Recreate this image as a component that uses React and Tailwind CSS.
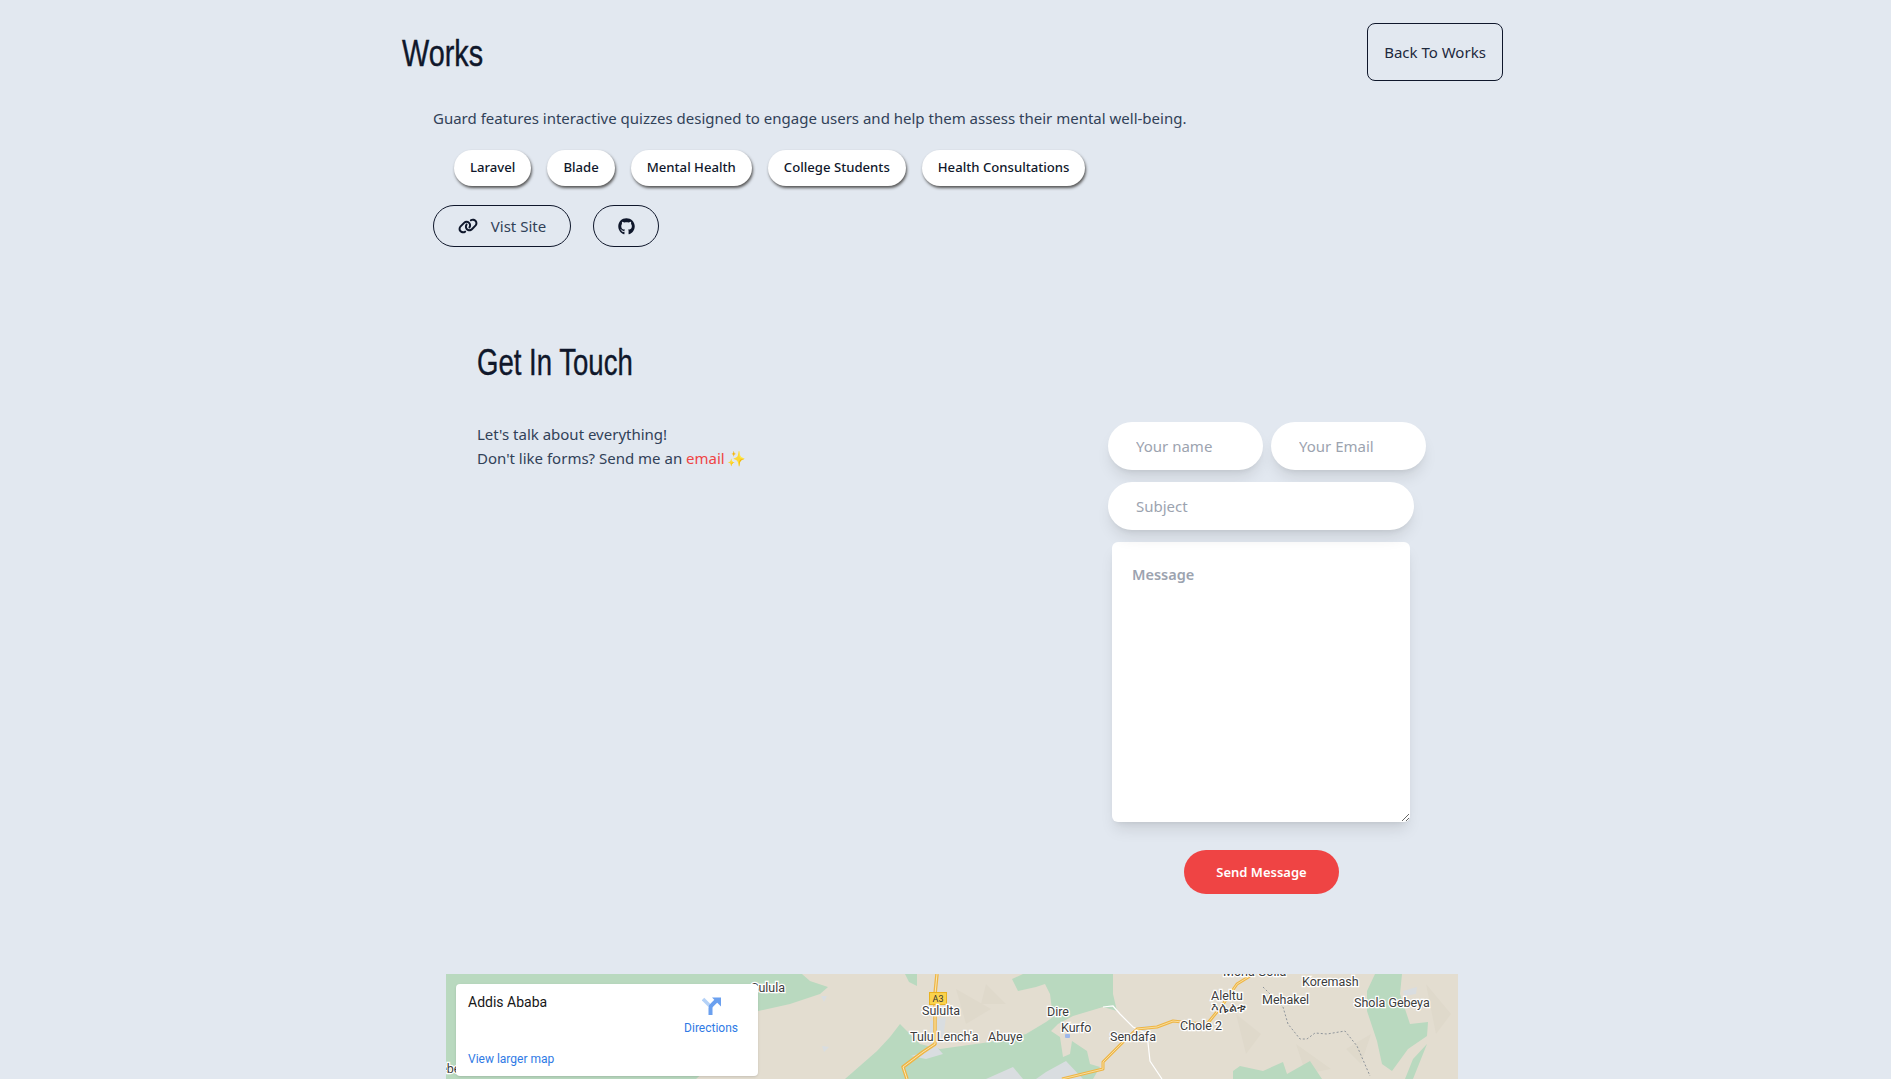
import { FaGithub, FaLink } from "react-icons/fa6";

const tags = ["Laravel", "Blade", "Mental Health", "College Students", "Health Consultations"];

const mapLabels = [
  ["Sulula", 305, 18],
  ["Debe", -14, 99],
  ["Sululta", 476, 41],
  ["Tulu Lench'a", 464, 67],
  ["Abuye", 542, 67],
  ["Dire", 601, 42],
  ["Kurfo", 615, 58],
  ["Sendafa", 664, 67],
  ["Chole 2", 734, 56],
  ["Aleltu", 765, 26],
  ["እሌልቱ", 765, 38],
  ["Moha Golla", 777, 2],
  ["Mehakel", 816, 30],
  ["Koremash", 856, 12],
  ["Shola Gebeya", 908, 33],
];

function MapDrawing() {
  return (
    <svg viewBox="0 0 1012 105" className="block h-[105px] w-full">
      <rect width="1012" height="105" fill="#e3ddd0" />
      <g fill="#dfd9cb">
        <path d="M790 40L815 60L800 80ZM850 70L885 95L860 100ZM900 75L925 60L915 90ZM980 10L1005 40L990 60ZM510 15L545 35L520 50ZM540 10L560 30L535 30Z" />
      </g>
      <g fill="#b9d9bf">
        <path d="M0 0H356L364 7L382 13L374 20L344 30L312 37L300 60L250 105H0Z" />
        <path d="M399 105L431 77L444 63L454 50L461 57L474 70L494 75L544 68L580 60L600 48L607 43L604 20L599 10L590 13L572 17L566 5L577 0H667V20L671 37L657 33L627 42L612 50L605 57L614 63L617 83L624 80L626 67L641 77L644 90L654 93L647 105Z" />
        <path d="M459 0H471V12L463 8Z" />
        <path d="M929 0H956L954 20L964 50L982 48L981 62L962 75L946 97L936 90L931 67L921 37V17Z" />
        <path d="M981 70L967 85L959 105H967Z" />
        <path d="M787 97L794 92L817 97L837 88L841 100L864 87L876 105H787Z" />
      </g>
      <g fill="#d9dde0">
        <path d="M484 47L500 43L497 65L490 72L497 80L480 85L465 82L478 78L484 70Z" />
        <path d="M567 93L577 105H540Z" />
        <path d="M620 87L637 105H590L600 98Z" />
        <path d="M957 17L971 13L970 20L958 22Z" />
        <path d="M691 53L705 50L700 60ZM375 22L381 22L378 28ZM376 72L383 73L378 78Z" />
      </g>
      <rect x="619" y="60" width="5" height="4" rx="1" fill="#9db7ea" />
      <path d="M657 33L667 32L674 40L687 53L701 60L704 87L716 105" fill="none" stroke="#fff" strokeWidth="1.2" />
      <path d="M817 13L837 33L842 50L854 65L861 65L869 59L881 60L899 57L911 72L924 102" fill="none" stroke="#8f959b" strokeWidth="1" strokeDasharray="2 2" />
      <g fill="none" strokeLinejoin="round">
        <path d="M491 0L489 20V70L477 78L457 93L461 105" stroke="#eeb544" strokeWidth="3.5" />
        <path d="M491 0L489 20V70L477 78L457 93L461 105" stroke="#fbe7b3" strokeWidth="1" />
        <path d="M616 105L657 95V88L677 68L691 55L711 53L727 47L745 49L761 50L775 33L791 10L804 2" stroke="#eeb544" strokeWidth="3" />
        <path d="M616 105L657 95V88L677 68L691 55L711 53L727 47L745 49L761 50L775 33L791 10L804 2" stroke="#fbe7b3" strokeWidth="0.8" />
      </g>
      <rect x="483.5" y="18.5" width="17" height="12" fill="#fad24c" stroke="#e9b21f" />
      <text x="492" y="28" textAnchor="middle" fontFamily="Roboto, sans-serif" fontSize="9" fill="#333">A3</text>
      <g fontFamily="Roboto, 'Noto Sans', 'DejaVu Sans', sans-serif" fontSize="12.5" fill="#3c3c3c" stroke="#fff" strokeWidth="2.5" paintOrder="stroke">
        {mapLabels.map(([name, x, y]) => (
          <text key={name} x={x} y={y}>{name}</text>
        ))}
      </g>
    </svg>
  );
}

export default function App() {
  return (
    <div className="h-[1079px] overflow-hidden bg-slate-200 font-['Noto_Sans',sans-serif] text-slate-700">
      <div className="ml-[402px] w-[1101px] pt-[23px]">
        <div className="flex items-center justify-between">
          <h1 className="origin-left translate-y-[2px] scale-x-[0.8] font-['Liberation_Sans',sans-serif] text-[36px] text-slate-900 [-webkit-text-stroke:0.4px_#0f172a]">Works</h1>
          <button className="h-[58px] w-[136px] rounded-lg border border-slate-900 text-[15px] text-slate-800">Back To Works</button>
        </div>
        <div className="ml-[31px]">
          <p className="mt-[25px] text-[15px] leading-6">Guard features interactive quizzes designed to engage users and help them assess their mental well-being.</p>
          <div className="ml-[21px] mt-[20px] flex gap-4">
            {tags.map((t) => (
              <span key={t} className="flex h-9 items-center rounded-full bg-white px-4 text-[13.15px] font-medium text-slate-900 shadow-[1px_2px_3px_#555]">{t}</span>
            ))}
          </div>
          <div className="mt-[19px] flex gap-[22px]">
            <a className="flex h-[42px] w-[138px] items-center justify-center gap-[13px] rounded-full border border-slate-900 text-[15px]"><FaLink className="text-slate-900" size={20} />Vist Site</a>
            <a className="flex h-[42px] w-[66px] items-center justify-center rounded-full border border-slate-900"><FaGithub className="text-slate-900" size={17} /></a>
          </div>
        </div>
      </div>
      <div className="ml-[477px] mt-[96px] flex w-[949px] justify-between">
        <div>
          <h2 className="origin-left scale-x-[0.745] font-['Liberation_Sans',sans-serif] text-[37px] leading-10 text-slate-900 [-webkit-text-stroke:0.4px_#0f172a]">Get In Touch</h2>
          <p className="mt-[39px] text-[15px] leading-6">Let's talk about everything!<br />Don't like forms? Send me an <a className="text-[#ef4444]">email</a><span className="ml-[2px] text-[15px]">✨</span></p>
        </div>
        <form className="mt-[79px] w-[318px]">
          <div className="flex gap-2">
            <input placeholder="Your name" className="h-12 w-[155px] rounded-full bg-white px-7 text-[15px] shadow-lg outline-none placeholder:text-[#9ca3af]" />
            <input placeholder="Your Email" className="h-12 w-[155px] rounded-full bg-white px-7 text-[15px] shadow-lg outline-none placeholder:text-[#9ca3af]" />
          </div>
          <input placeholder="Subject" className="mt-3 h-12 w-[306px] rounded-full bg-white px-7 text-[15px] shadow-lg outline-none placeholder:text-[#9ca3af]" />
          <textarea placeholder="Message" className="ml-1 mt-3 block h-[280px] w-[298px] rounded-md bg-white px-5 pb-5 pt-[22px] text-[14.5px] font-semibold shadow-lg outline-none placeholder:text-[#9ca3af]" />
          <button className="ml-[76px] mt-7 h-11 w-[155px] rounded-full bg-[#ef4444] pt-[1px] text-[13px] font-semibold text-white">Send Message</button>
        </form>
      </div>
      <div className="relative ml-[446px] mt-[80px] w-[1012px]">
        <MapDrawing />
        <div className="absolute left-[10px] top-[10px] flex h-[92px] w-[302px] justify-between rounded-sm bg-white pb-[9px] pl-3 pr-5 pt-[10px] font-['Roboto',sans-serif] shadow">
          <div className="flex flex-col justify-between">
            <span className="text-[14px] leading-4 text-neutral-900">Addis Ababa</span>
            <a className="text-[12px] leading-4 text-[#2f7ae5]">View larger map</a>
          </div>
          <div className="mt-[3px] flex flex-col items-center text-[12px] leading-4 text-[#2f7ae5]">
            <svg viewBox="0 0 19 18" width="19" height="18">
              <path d="M1 2L8 9" stroke="#b5d2f7" strokeWidth="3.5" />
              <path d="M8.5 18V11Q8.5 9 10 8L15 3" fill="none" stroke="#6ba0ef" strokeWidth="4" />
              <path d="M10 0.5H19V9.5Z" fill="#6ba0ef" />
            </svg>
            <span className="mt-[5px]">Directions</span>
          </div>
        </div>
      </div>
    </div>
  );
}
